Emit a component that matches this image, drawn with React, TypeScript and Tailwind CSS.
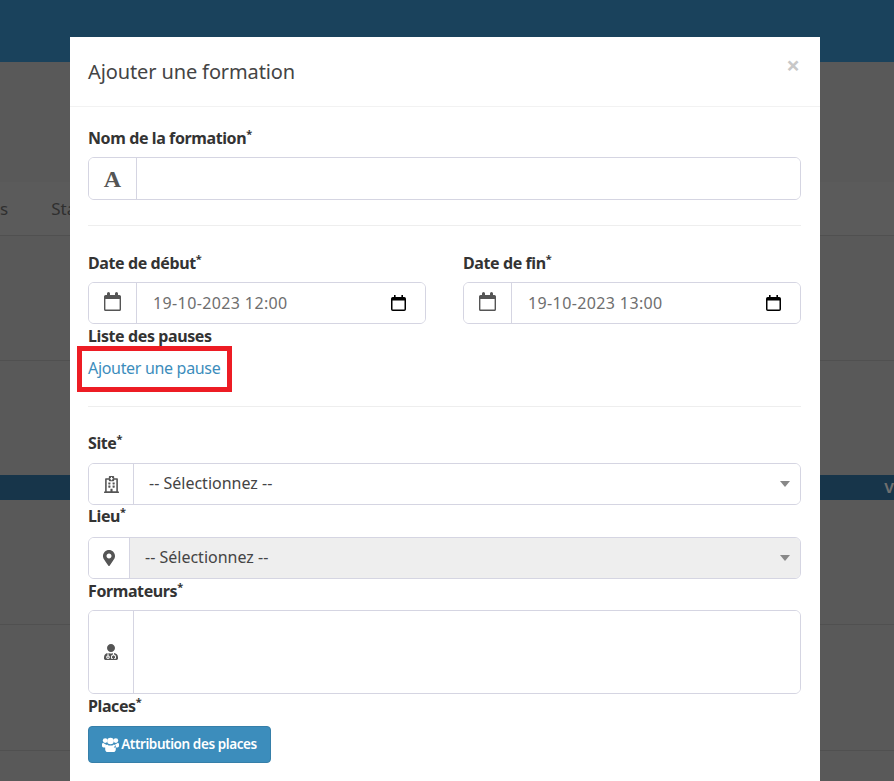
import type { ReactNode } from 'react';
import { FaRegHospital, FaMapMarkerAlt, FaUserMd } from 'react-icons/fa';

function Label({ text, required = true, className = '' }: { text: string; required?: boolean; className?: string }) {
  return (
    <label className={`block h-5 text-[16px] leading-5 font-bold tracking-[-0.4px] text-[#333] ${className}`}>
      {text}
      {required && <sup className="text-[11px] leading-none top-[-6px] relative align-baseline">*</sup>}
    </label>
  );
}

function Group({ icon, addon = 'w-[48px]', h = 'h-[42px]', disabled = false, children }: { icon: ReactNode; addon?: string; h?: string; disabled?: boolean; children?: ReactNode }) {
  return (
    <div className={`flex ${h} rounded-md border border-[#d5d5e2] overflow-hidden`}>
      <div className={`${addon} shrink-0 flex items-center justify-center bg-white border-r border-[#d5d5e2] text-[#555]`}>{icon}</div>
      <div className={`flex-1 flex items-center ${disabled ? 'bg-[#eee]' : 'bg-white'}`}>{children}</div>
    </div>
  );
}

function CalendarIcon() {
  return (
    <svg width="17" height="19" viewBox="0 0 17 19" className="mb-[3px]">
      <path d="M3 1.5a1.5 1.5 0 0 1 3 0V3h5V1.5a1.5 1.5 0 0 1 3 0V3h1.4A1.6 1.6 0 0 1 17 4.6v12.8a1.6 1.6 0 0 1-1.6 1.6H1.6A1.6 1.6 0 0 1 0 17.4V4.6A1.6 1.6 0 0 1 1.6 3H3zM1.4 7v10.2c0 .2.2.4.4.4h13.4c.2 0 .4-.2.4-.4V7z" fill="currentColor" />
    </svg>
  );
}

function UsersIcon() {
  return (
    <svg width="17" height="15" viewBox="0 0 17 15" fill="currentColor">
      <circle cx="3.2" cy="3.6" r="2.4" />
      <circle cx="13.8" cy="3.6" r="2.4" />
      <circle cx="8.5" cy="4" r="3.3" />
      <path d="M0 7.2c0-.8.7-1.2 1.4-1.2.6.6 1.3 1 2.2 1 .1 1.4.7 2.6 1.6 3.4H1.6C.7 10.4 0 9.8 0 9zM17 7.2c0-.8-.7-1.2-1.4-1.2-.6.6-1.3 1-2.2 1-.1 1.4-.7 2.6-1.6 3.4h3.6c.9 0 1.6-.6 1.6-1.4zM5.2 7.4c.8.8 2 1.2 3.3 1.2s2.5-.4 3.3-1.2c1 .1 2 .9 2 2.3v2.7c0 1.4-1 2.6-2.4 2.6H5.6c-1.4 0-2.4-1.2-2.4-2.6V9.7c0-1.4 1-2.2 2-2.3z" />
    </svg>
  );
}

function DateValue({ value }: { value: string }) {
  return (
    <div className="flex flex-1 items-center justify-between pl-4 pr-[19px] text-[#6e6e6e]">
      <span className="text-[16px] tracking-[0.38px]">{value}</span>
      <svg width="15" height="16" viewBox="0 0 15 16" className="text-black">
        <path d="M3 0h1.6v2h5.8V0H12v2h1.2A1.8 1.8 0 0 1 15 3.8v10.4a1.8 1.8 0 0 1-1.8 1.8H1.8A1.8 1.8 0 0 1 0 14.2V3.8A1.8 1.8 0 0 1 1.8 2H3zM1.5 5.5v8.7c0 .2.1.3.3.3h11.4c.2 0 .3-.1.3-.3V5.5z" fill="currentColor" />
      </svg>
    </div>
  );
}

function SelectValue({ pad }: { pad: string }) {
  return (
    <div className={`flex flex-1 items-center justify-between ${pad} pr-[10px] text-[16px] text-[#444]`}>
      <span className="pb-[2px]">-- Sélectionnez --</span>
      <svg width="10" height="6" viewBox="0 0 10 6">
        <polygon points="0,0 10,0 5,6" fill="#888" />
      </svg>
    </div>
  );
}

export default function App() {
  return (
    <div className='relative h-[781px] overflow-hidden bg-[#595959] font-["Noto_Sans",sans-serif]'>
      {/* page behind the modal */}
      <div className="h-[62px] bg-[#1a425c]" />
      <div className="h-[120px]" />
      <div className="h-[54px] flex items-center gap-[43px] border-b border-[#505050] bg-[#5b5b5b] text-[17px] text-[#2f2f2f]">
        <span>s</span>
        <span>Statistiques</span>
      </div>
      <div className="h-[125px] border-b border-[#505050]" />
      <div className="h-[114px]" />
      <div className="h-[25px] bg-[#17354a] flex items-center justify-end text-[15px] font-bold text-[#6f6f6f]">V</div>
      <div className="h-[125px] border-b border-[#505050]" />
      <div className="h-[126px] border-b border-[#505050]" />

      {/* modal */}
      <div className="absolute left-[70px] top-[37px] w-[750px] h-[800px] bg-white">
        <div className="relative h-[70px] border-b border-[#f2f2f2] pl-[18px] pt-[21px]">
          <h4 className="text-[20px] leading-7 tracking-[-0.12px] text-[#444]">Ajouter une formation</h4>
          <span className="absolute right-[20px] top-[14px] text-[24px] leading-7 font-bold text-[#c8c8c8]">×</span>
        </div>
        <div className="pl-[18px] pr-[19px] pt-[21px]">
          <Label text="Nom de la formation" className="mb-[9px]" />
          <Group h="h-[43px]" icon={<span className='font-["Liberation_Serif",serif] text-[24px] leading-none font-bold'>A</span>} />

          <hr className="mt-[25px] border-[#eee]" />

          <div className="mt-[27px] grid grid-cols-2 gap-[37px]">
            <div>
              <Label text="Date de début" className="mb-[9px]" />
              <Group icon={<CalendarIcon />}>
                <DateValue value="19-10-2023 12:00" />
              </Group>
            </div>
            <div>
              <Label text="Date de fin" className="mb-[9px]" />
              <Group icon={<CalendarIcon />}>
                <DateValue value="19-10-2023 13:00" />
              </Group>
            </div>
          </div>

          <Label text="Liste des pauses" required={false} className="mt-[2px]" />
          <div className="mt-3 flex">
            <a className="relative h-5 text-[16px] leading-5 tracking-[-0.32px] text-[#3c8dbc]">
              Ajouter une pause
              <span className="absolute -left-[11px] -right-[12px] -top-[12px] -bottom-[14px] border-[5px] border-[#ed1c24]" />
            </a>
          </div>

          <hr className="mt-[28px] border-[#eee]" />

          <Label text="Site" className="mt-[26px] mb-[10px]" />
          <Group addon="w-[45px]" icon={<FaRegHospital size={17} />}>
            <SelectValue pad="pl-[15px]" />
          </Group>

          <Label text="Lieu" className="mt-px mb-[11px]" />
          <Group addon="w-[41px]" disabled icon={<FaMapMarkerAlt size={16} />}>
            <SelectValue pad="pl-[15px]" />
          </Group>

          <Label text="Formateurs" className="mt-[2px] mb-[9px]" />
          <Group addon="w-[45px]" h="h-[84px]" icon={<FaUserMd size={16} />} />

          <Label text="Places" className="mt-[2px] mb-[10px]" />
          <button className="flex items-center gap-[2px] h-[37px] w-[183px] justify-center rounded bg-[#3c8dbc] border border-[#367fa9] text-[13.5px] font-semibold tracking-[-0.4px] text-white">
            <UsersIcon />
            Attribution des places
          </button>
        </div>
      </div>
    </div>
  );
}
